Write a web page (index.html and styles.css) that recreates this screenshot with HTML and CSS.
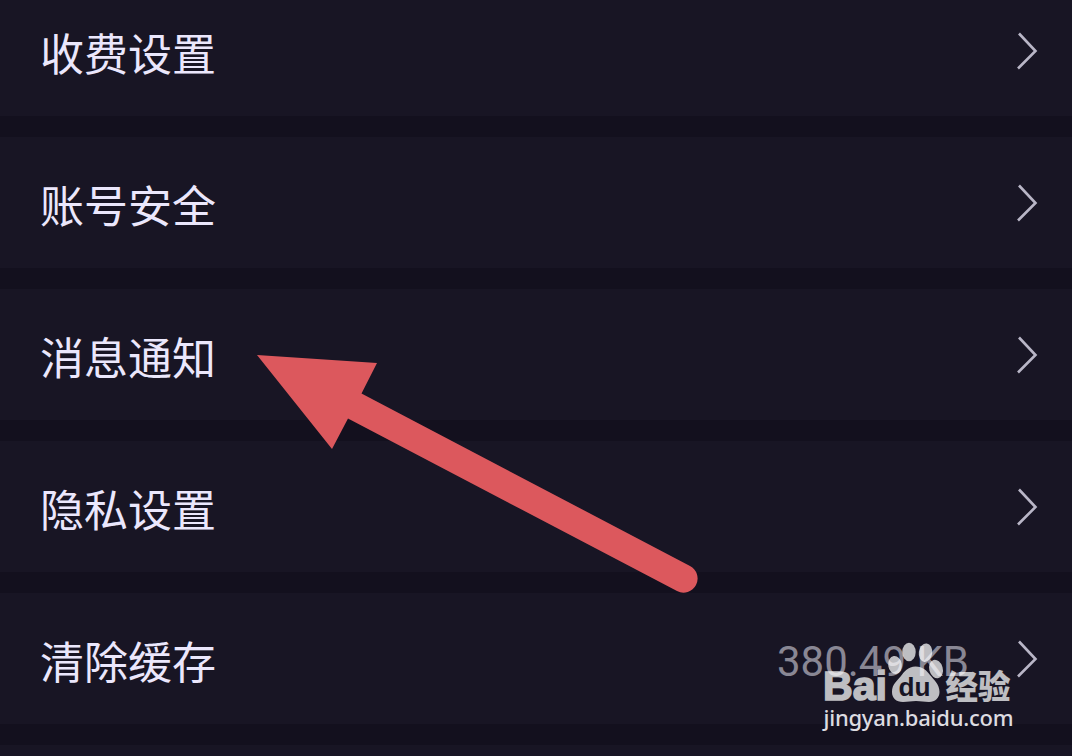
FILE: index.html
```html
<!DOCTYPE html>
<html lang="zh-CN">
<head>
	<meta charset="UTF-8">
	<title>设置</title>
	<link rel="stylesheet" href="styles.css">
</head>
<body>
	<ul class="list">
		<li>
			<span class="name">收费设置</span>
			<svg class="more" width="24" height="40" viewBox="0 0 24 40"><path d="M3 2.5 L19.5 20 L2 37.5"/></svg>
		</li>
		<li>
			<span class="name">账号安全</span>
			<svg class="more" width="24" height="40" viewBox="0 0 24 40"><path d="M3 2.5 L19.5 20 L2 37.5"/></svg>
		</li>
		<li>
			<span class="name">消息通知</span>
			<svg class="more" width="24" height="40" viewBox="0 0 24 40"><path d="M3 2.5 L19.5 20 L2 37.5"/></svg>
		</li>
		<li>
			<span class="name">隐私设置</span>
			<svg class="more" width="24" height="40" viewBox="0 0 24 40"><path d="M3 2.5 L19.5 20 L2 37.5"/></svg>
		</li>
		<li>
			<span class="name">清除缓存</span>
			<span class="size">380.49 KB</span>
			<svg class="more" width="24" height="40" viewBox="0 0 24 40"><path d="M3 2.5 L19.5 20 L2 37.5"/></svg>
		</li>
		<li class="last"></li>
	</ul>

	<!-- 红色箭头 -->
	<svg class="arrow" width="442" height="240" viewBox="0 0 442 240">
		<path d="M1 1 L121 9 L105.5 39.5 L434 212 A13.7 13.7 0 0 1 421 237 L92 64.5 L76 95 Z"/>
	</svg>

	<!-- 水印 -->
	<svg class="mark" width="204" height="100" viewBox="0 0 204 100">
		<g class="logo">
			<text class="bai" x="7" y="62" textLength="64" lengthAdjust="spacingAndGlyphs">Bai</text>
			<ellipse cx="79" cy="27" rx="6.800" ry="9" transform="rotate(-8 79 27)"/>
			<ellipse cx="93" cy="14" rx="6.700" ry="9.300"/>
			<ellipse cx="109.500" cy="14.700" rx="6.700" ry="9.300" transform="rotate(8 109.500 14.700)"/>
			<ellipse cx="120" cy="31" rx="6.800" ry="9.300" transform="rotate(-16 120 31)"/>
			<path d="M99.500 28.500 C107 28.500 111 33 114 37 C118 42 123.500 46 123.500 54 C123.500 60 119 64 113 64 C108 64 105 63 100 63 C95 63 92 64 87 64 C80 64 76 60 76 54 C76 46 81 43 85 38 C88 34 92 28.500 99.500 28.500 Z"/>
			<text class="jy" x="129.500" y="60.500" textLength="65" lengthAdjust="spacingAndGlyphs">经验</text>
		</g>
		<text class="du" x="82.500" y="58" textLength="32" lengthAdjust="spacingAndGlyphs">du</text>
		<text class="url" x="7.500" y="88" textLength="190">jingyan.baidu.com</text>
	</svg>
</body>
</html>
```

FILE: styles.css
```css
* {
    padding: 0;
    margin: 0;
    list-style: none;
}

body {
    position: relative;
    height: 756px;
    overflow: hidden;
    background: #13101e;
    font-family: "Noto Sans CJK SC", sans-serif;
}

.list {
    display: flex;
    flex-direction: column;
    gap: 21px;
    margin-top: -15px;
}

.list li {
    display: flex;
    align-items: center;
    flex-shrink: 0;
    height: 131px;
    padding: 0 32px 0 40px;
    background: #181524;
}

.list .last {
    height: 11px;
}

.name {
    flex: 1;
    padding-top: 2px;
    font-size: 44px;
    line-height: 60px;
    color: #ebe7fc;
}

.size {
    margin-right: 47px;
    padding-top: 6px;
    font-family: Roboto, sans-serif;
    font-size: 42px;
    color: #898794;
}

.more {
    fill: none;
    stroke: #b9b6c7;
    stroke-width: 2.6;
}

.arrow {
    position: absolute;
    left: 256px;
    top: 354px;
    fill: #dc585d;
}

.mark {
    position: absolute;
    left: 816px;
    top: 638px;
    fill: #fff;
}

.logo {
    opacity: 0.72;
}

.bai {
    font: bold 41px "Liberation Sans", sans-serif;
    stroke: #fff;
    stroke-width: 1.6;
}

.du {
    font: bold 25px "Liberation Sans", sans-serif;
    fill: #181524;
}

.jy {
    font: 900 33px "Noto Sans CJK SC", sans-serif;
}

.url {
    font: 500 22px "Noto Sans", sans-serif;
    fill: #dddce1;
}
```
